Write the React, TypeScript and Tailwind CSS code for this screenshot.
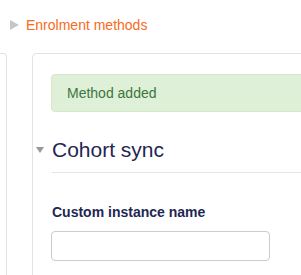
import React from "react";

const App = () => {
  return (
    <div className="w-[301px] h-[275px] overflow-hidden bg-white font-['Liberation_Sans',Arial,sans-serif]">
      <div className="flex items-center h-[20px] mt-[15px] pl-[10px]">
        <svg width="9" height="10" viewBox="0 0 9 10" className="mr-[7px]">
          <polygon points="0,0 9,5 0,10" fill="#c6c6c6" />
        </svg>
        <a href="#" className="text-[14px] leading-[20px] text-[#f96a1a]">
          Enrolment methods
        </a>
      </div>

      <div className="flex mt-[18px] h-[240px]">
        <div className="w-[7px] shrink-0 border-t border-r border-[#e3e3e3] rounded-tr-[4px]" />
        <div className="ml-[25px] w-[320px] shrink-0 border-t border-l border-[#e3e3e3] rounded-tl-[5px] pt-[20px] pl-[18px]">
          <div className="h-[38px] flex items-center pl-[15px] bg-[#dff0d8] border border-[#d6e9c6] rounded-[4px] text-[14px] text-[#3c763d]">
            Method added
          </div>

          <div className="flex mt-[25px] -ml-[15px]">
            <svg width="8" height="6" viewBox="0 0 8 6" className="mt-[10px] mr-[8px] shrink-0">
              <polygon points="0,0 8,0 4,6" fill="#999999" />
            </svg>
            <div className="flex-1 border-b border-[#e5e5e5] pb-[10px]">
              <h3 className="text-[21px] leading-[25px] text-[#1f2752]">Cohort sync</h3>
            </div>
          </div>

          <div className="mt-[29px] pl-[1px]">
            <label className="block text-[14px] leading-[20px] font-bold text-[#1f2752]">
              Custom instance name
            </label>
            <input
              type="text"
              className="mt-[9px] -ml-[1px] block w-[219px] h-[30px] border border-[#cccccc] rounded-[4px] bg-white"
            />
          </div>
        </div>
      </div>
    </div>
  );
};

export default App;
